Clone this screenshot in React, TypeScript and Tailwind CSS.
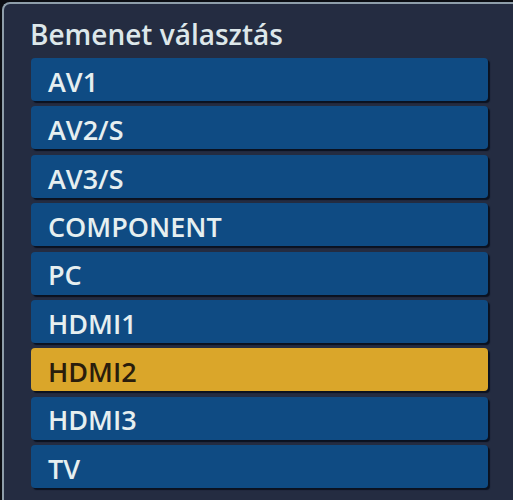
const items = ["AV1", "AV2/S", "AV3/S", "COMPONENT", "PC", "HDMI1", "HDMI2", "HDMI3", "TV"];
const selected = "HDMI2";

export default function App() {
  return (
    <div className="w-[513px] h-[500px] bg-[#0b0d12] overflow-hidden" style={{ fontFamily: '"Open Sans", sans-serif' }}>
      <div className="ml-[2px] mt-[2px] h-[520px] w-[540px] rounded-tl-[8px] border-l-2 border-t-2 border-[#8e9eaa] bg-[#242c41]">
        <div className="pl-[26px] pt-[13px] h-[54px] text-[28px] leading-[34px] font-semibold text-[#dde7ea]">
          Bemenet választás
        </div>
        <div className="flex flex-col gap-[5.4px] pl-[27px] w-[484px]">
          {items.map((it) => {
            const active = it === selected;
            return (
              <div
                key={it}
                className={
                  "h-[43px] rounded-[4px] pl-[17px] pt-[5px] flex items-center text-[27px] font-semibold shadow-[2px_2px_1px_#0a1120] " +
                  (active ? "bg-[#daa62a] text-[#2a1d0c]" : "bg-[#0f4b83] text-[#e6eff0]")
                }
              >
                {it}
              </div>
            );
          })}
        </div>
      </div>
    </div>
  );
}
